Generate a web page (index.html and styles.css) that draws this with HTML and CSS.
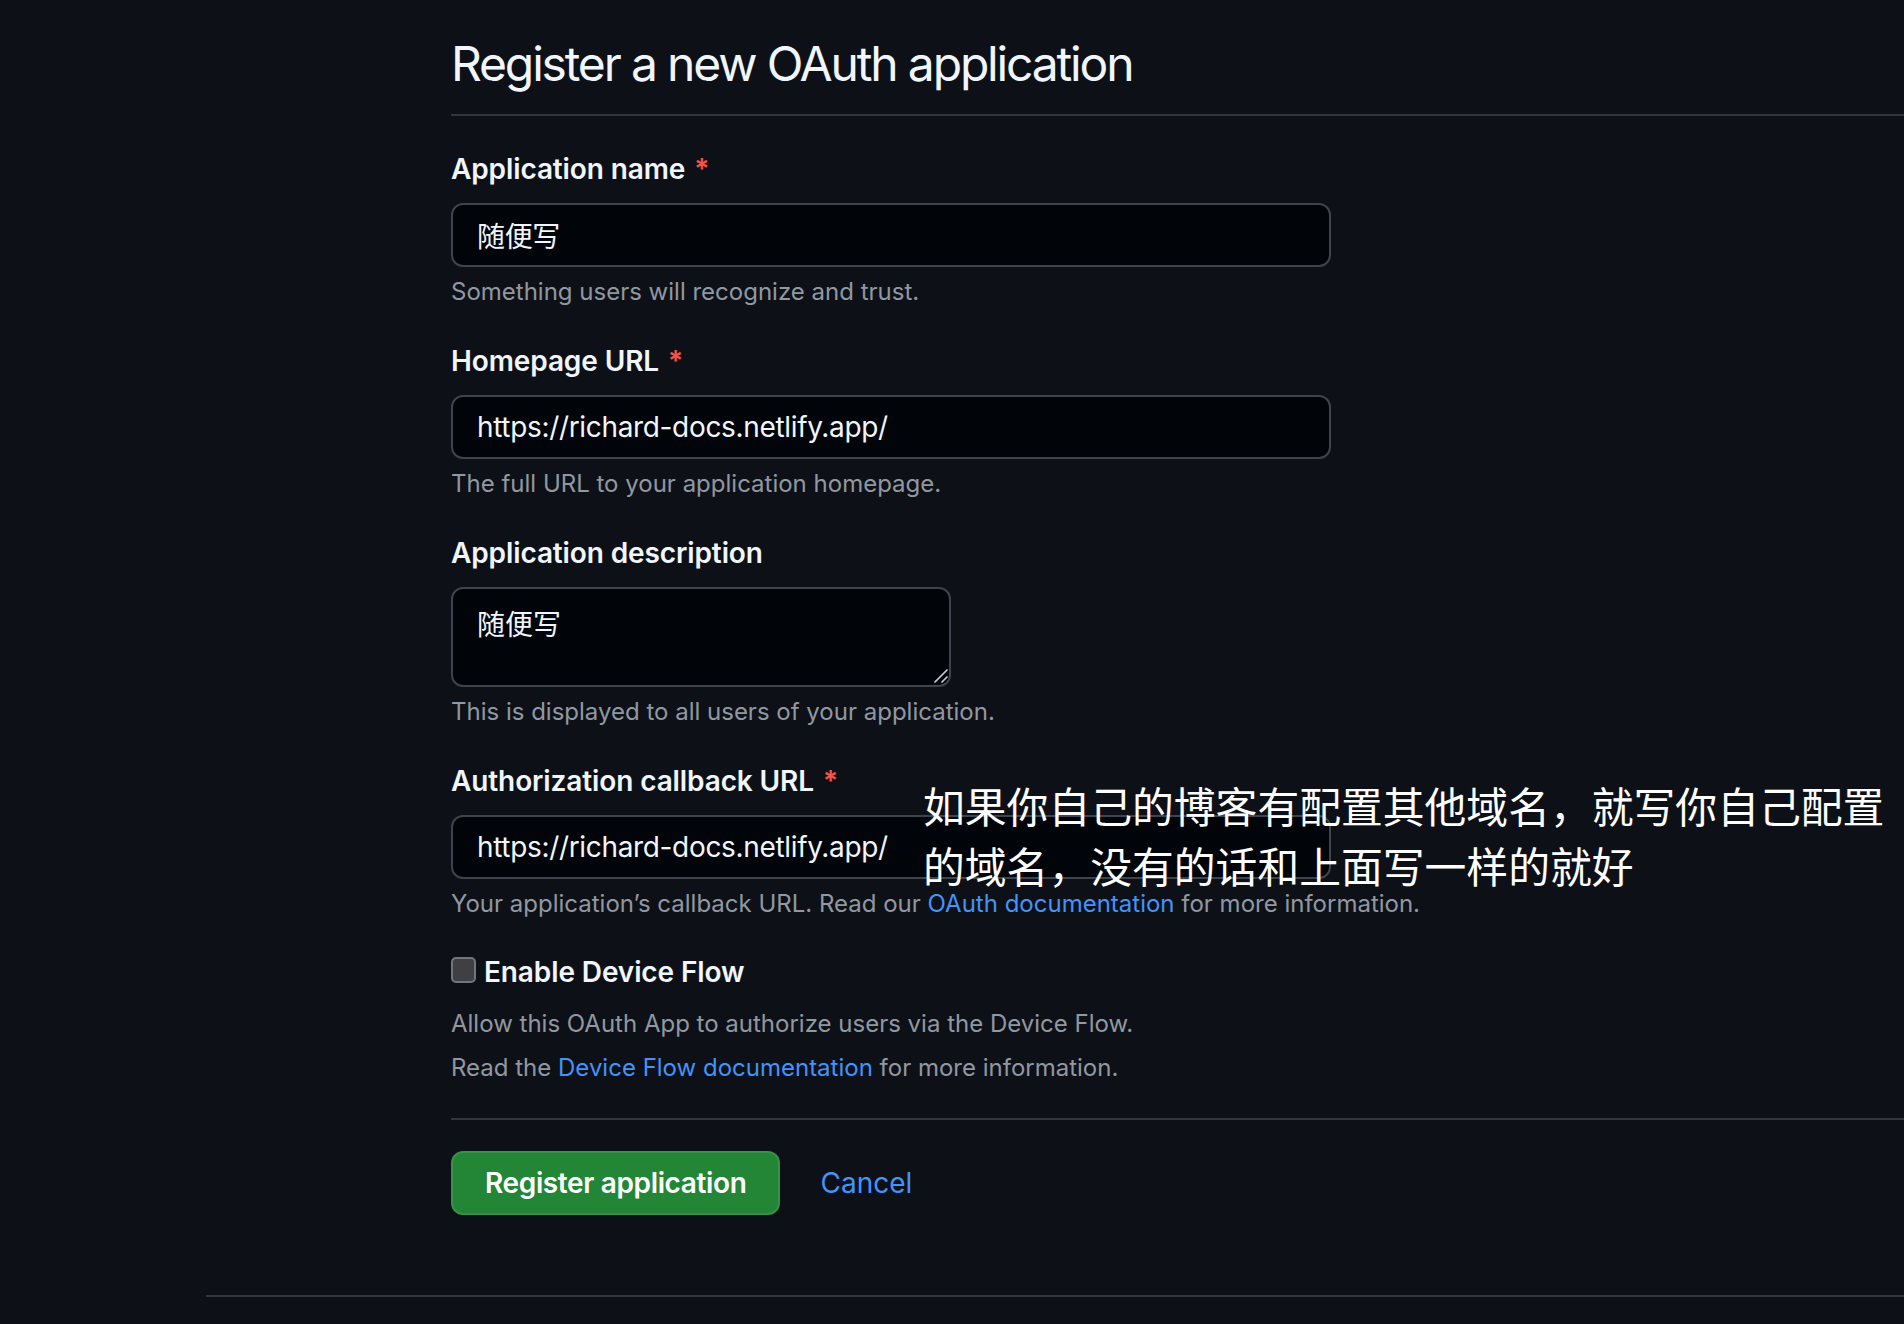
FILE: index.html
```html
<!DOCTYPE html>
<html lang="en">
<head>
<meta charset="utf-8">
<title>Register a new OAuth application</title>
<link rel="stylesheet" href="styles.css">
</head>
<body>
<div class="page">
  <main class="content">
    <div class="subhead">
      <h2 class="subhead-heading">Register a new OAuth application</h2>
    </div>
    <form class="form">
      <div class="field">
        <label class="label">Application name <span class="req">*</span></label>
        <input class="input" type="text" value="随便写">
        <p class="note">Something users will recognize and trust.</p>
      </div>
      <div class="field">
        <label class="label">Homepage URL <span class="req">*</span></label>
        <input class="input" type="text" value="https://richard-docs.netlify.app/">
        <p class="note">The full URL to your application homepage.</p>
      </div>
      <div class="field">
        <label class="label">Application description</label>
        <div class="textarea-wrap">
          <textarea class="textarea">随便写</textarea>
          <svg class="resizer" width="20" height="20" viewBox="0 0 20 20" aria-hidden="true">
            <line x1="4" y1="15" x2="16" y2="3" />
            <line x1="11" y1="15" x2="16" y2="10" />
          </svg>
        </div>
        <p class="note">This is displayed to all users of your application.</p>
      </div>
      <div class="field field-callback">
        <label class="label">Authorization callback URL <span class="req">*</span></label>
        <input class="input" type="text" value="https://richard-docs.netlify.app/">
        <p class="note">Your application’s callback URL. Read our <a class="link" href="#">OAuth documentation</a> for more information.</p>
        <div class="annotation">
          <div class="annotation-line">如果你自己的博客有配置其他域名，就写你自己配置</div>
          <div class="annotation-line">的域名，没有的话和上面写一样的就好</div>
        </div>
      </div>
      <div class="check-group">
        <div class="check-row">
          <span class="checkbox"></span>
          <span class="check-label">Enable Device Flow</span>
        </div>
        <p class="note note-allow">Allow this OAuth App to authorize users via the Device Flow.</p>
        <p class="note note-read">Read the <a class="link" href="#">Device Flow documentation</a> for more information.</p>
      </div>
      <div class="actions">
        <button class="btn-primary" type="button">Register application</button>
        <a class="cancel" href="#">Cancel</a>
      </div>
    </form>
  </main>
  <footer class="footer"></footer>
</div>
</body>
</html>
```
FILE: styles.css
```css
html, body {
  margin: 0;
  padding: 0;
  background: #0d1117;
}
body {
  font-family: Inter, "Noto Sans", "Noto Sans CJK SC", sans-serif;
  color: #f0f6fc;
  overflow: hidden;
  height: 1324px;
}
.page {
  padding-left: 206px;
}
.content {
  margin-left: 245px;
  padding-top: 34px;
}
.subhead {
  padding-bottom: 20px;
  border-bottom: 2px solid #30363d;
}
.subhead-heading {
  margin: 0;
  font-size: 48px;
  line-height: 60px;
  font-weight: 400;
  letter-spacing: -0.045em;
  color: #f0f6fc;
}
.form {
  margin: 0;
  padding-top: 31px;
}
.field {
  display: flex;
  flex-direction: column;
  align-items: flex-start;
  margin-bottom: 29px;
}
.label {
  padding-top: 2px;
  font-size: 28px;
  line-height: 40px;
  font-weight: 600;
  letter-spacing: -0.004em;
  color: #f0f6fc;
}
.req {
  margin-left: 2px;
  color: #f85149;
}
.input {
  box-sizing: border-box;
  margin-top: 14px;
  width: 880px;
  height: 64px;
  padding: 0 24px;
  border: 2px solid #3d444d;
  border-radius: 12px;
  background: #010409;
  color: #f0f6fc;
  font-family: Inter, "Noto Sans CJK SC", sans-serif;
  font-size: 28px;
  letter-spacing: -0.012em;
  outline: none;
}
.textarea-wrap {
  position: relative;
  margin-top: 14px;
  width: 500px;
  height: 100px;
}
.textarea {
  display: block;
  box-sizing: border-box;
  margin: 0;
  width: 500px;
  height: 100px;
  padding: 16px 24px;
  border: 2px solid #3d444d;
  border-radius: 12px;
  background: #010409;
  color: #f0f6fc;
  font-family: Inter, "Noto Sans CJK SC", sans-serif;
  font-size: 28px;
  line-height: 40px;
  resize: none;
  outline: none;
}
.resizer {
  position: absolute;
  left: 480px;
  top: 80px;
}
.resizer line {
  stroke: #c4cad3;
  stroke-width: 1.7;
  stroke-linecap: round;
}
.note {
  margin: 7px 0 0;
  font-size: 24px;
  line-height: 36px;
  color: #9198a1;
}
.link {
  color: #4493f8;
  text-decoration: none;
}
.field-callback {
  position: relative;
}
.annotation {
  position: absolute;
  left: 472px;
  top: 25px;
  display: flex;
  flex-direction: column;
  gap: 18px;
  font-family: "Noto Sans CJK SC", sans-serif;
  font-size: 41.8px;
  line-height: 42px;
  color: #ffffff;
  white-space: nowrap;
}
.check-group {
  margin-top: 30px;
  padding-bottom: 32px;
  border-bottom: 2px solid #30363d;
}
.check-row {
  display: flex;
  align-items: flex-start;
}
.checkbox {
  box-sizing: border-box;
  width: 25px;
  height: 26px;
  margin-top: 5px;
  border: 2px solid #72767c;
  border-radius: 5px;
  background: #3e4044;
}
.check-label {
  margin-left: 8px;
  font-size: 28px;
  line-height: 40px;
  font-weight: 600;
  letter-spacing: -0.004em;
}
.note-allow {
  margin-top: 14px;
}
.note-read {
  margin-top: 8px;
}
.actions {
  display: flex;
  align-items: center;
  padding-top: 31px;
  padding-bottom: 80px;
}
.btn-primary {
  box-sizing: border-box;
  height: 64px;
  padding: 0 32px;
  border: 2px solid rgba(240, 246, 252, 0.1);
  border-radius: 12px;
  background: #238636;
  color: #ffffff;
  font-family: Inter, sans-serif;
  font-size: 28px;
  font-weight: 600;
  letter-spacing: -0.013em;
}
.cancel {
  margin-left: 40px;
  font-size: 28px;
  line-height: 40px;
  color: #4493f8;
  text-decoration: none;
}
.footer {
  border-top: 2px solid #30363d;
  height: 60px;
}
```
